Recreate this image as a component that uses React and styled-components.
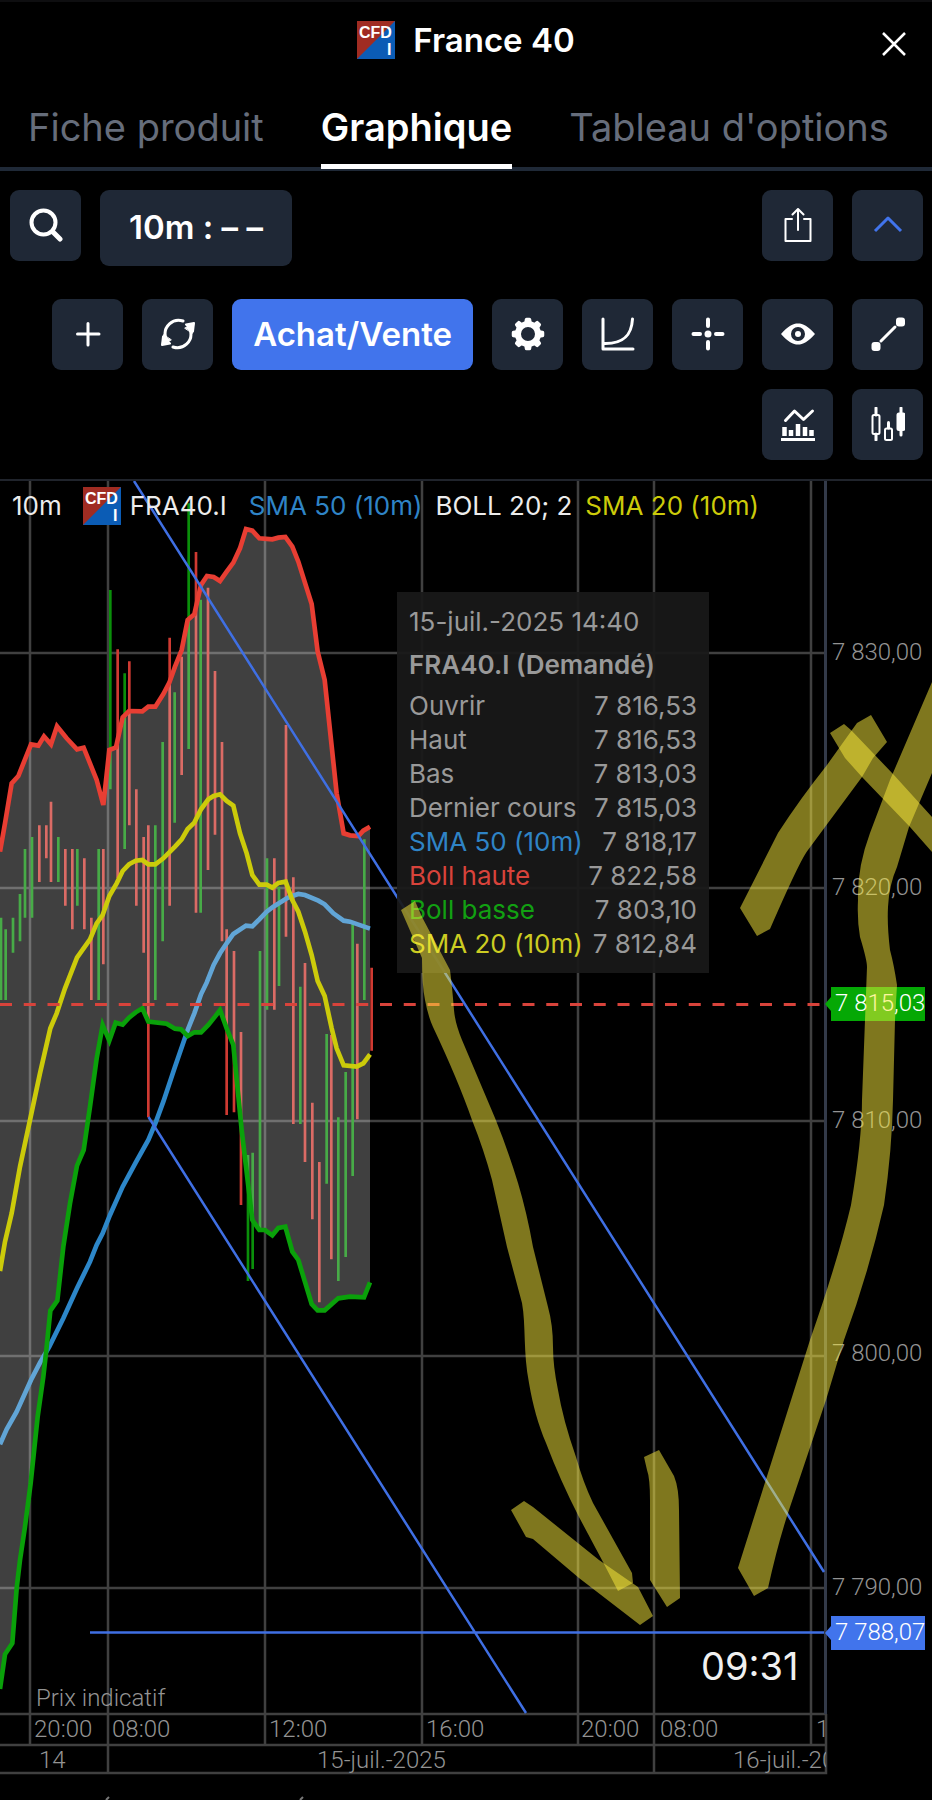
import React from 'react';
import styled, { createGlobalStyle } from 'styled-components';

const GlobalStyle = createGlobalStyle`
  body {
    margin: 0;
    background: #000;
    color: #fff;
    font-family: Inter, 'Liberation Sans', sans-serif;
  }
`;

const Page = styled.div`
  overflow: hidden;
`;

const Header = styled.header`
  display: grid;
  grid-template-columns: 1fr auto 1fr;
  align-items: center;
  height: 76px;
  padding: 0 20px;
  border-top: 2px solid #0e0e10;
`;

const Title = styled.h1`
  display: flex;
  grid-column: 2;
  align-items: center;
  gap: 18px;
  margin: 0;
  font-size: 33px;
  font-weight: 600;
  line-height: 40px;
`;

const CloseButton = styled.button`
  display: flex;
  justify-self: end;
  padding: 4px;
  margin-top: 8px;
  border: 0;
  background: none;
  color: #fff;
`;

const Tabs = styled.nav`
  display: flex;
  gap: 57px;
  padding: 0 28px;
  border-bottom: 4px solid #1f2937;
`;

const Tab = styled.a`
  padding: 26px 0 14px;
  margin-bottom: -2px;
  border-bottom: 5px solid ${props => (props.$active ? '#fff' : 'transparent')};
  color: ${props => (props.$active ? '#fff' : '#666d7b')};
  font-size: 38px;
  font-weight: ${props => (props.$active ? 600 : 400)};
  line-height: 46px;
  text-decoration: none;
  white-space: nowrap;
`;

const Toolbar = styled.div`
  display: flex;
  align-items: flex-start;
  gap: 19px;
  padding: 19px 9px 33px 10px;
`;

const Tools = styled.div`
  display: flex;
  flex-wrap: wrap;
  justify-content: flex-end;
  gap: 19px;
  padding: 0 9px 19px;
`;

const Button = styled.button`
  display: flex;
  align-items: center;
  justify-content: center;
  box-sizing: border-box;
  min-width: 71px;
  height: ${props => (props.$tall ? 76 : 71)}px;
  padding: 0 ${props => props.$pad || 0}px 2px;
  border: 0;
  border-radius: 9px;
  background: ${props => (props.$primary ? '#4174ec' : '#1f2836')};
  color: ${props => (props.$accent ? '#4174ec' : '#fff')};
  font: 600 33px Inter, 'Liberation Sans', sans-serif;
  white-space: pre;
`;

const Spacer = styled.div`
  flex: 1;
`;

const Chart = styled.main`
  position: relative;
  border-top: 2px solid #20242c;
`;

const Plot = styled.svg`
  display: block;
  width: 100%;
  height: auto;
`;

const Overlay = styled(Plot)`
  position: absolute;
  top: 0;
  left: 0;
  pointer-events: none;
`;

const Legend = styled.div`
  position: absolute;
  top: 6px;
  left: 12px;
  display: flex;
  align-items: center;
  gap: 13px;
  font-size: 26px;
  line-height: 38px;
  white-space: nowrap;
`;

const Symbol = styled.span`
  display: flex;
  align-items: center;
  gap: 9px;
  padding: 0 9px 0 8px;
`;

const Label = styled.span`
  color: ${props => props.$color || '#ececec'};
`;

const Tooltip = styled.section`
  position: absolute;
  top: 111px;
  left: 397px;
  box-sizing: border-box;
  width: 312px;
  padding: 12px;
  background: rgba(25, 25, 25, 0.93);
  color: #999;
  font-size: 26px;
`;

const TooltipDate = styled.div`
  line-height: 36px;
`;

const TooltipTitle = styled.h2`
  margin: 7px 0 6px;
  font-size: 26px;
  font-weight: 600;
  line-height: 36px;
`;

const Quotes = styled.table`
  width: 100%;
  border-collapse: collapse;
  line-height: 34px;
  white-space: nowrap;

  td {
    padding: 0;
    text-align: right;
  }
`;

const QuoteName = styled.th`
  padding: 0;
  color: ${props => props.$color || '#999'};
  font-weight: 400;
  text-align: left;
`;

const AxisText = styled.text`
  fill: ${props => props.$color || '#939393'};
  font-family: Roboto, 'Liberation Sans', sans-serif;
  font-size: 24px;
  font-weight: 300;
`;

const Countdown = styled.text`
  fill: #f0f0f0;
  font-family: Inter, 'Liberation Sans', sans-serif;
  font-size: 38px;
`;

const LogoText = styled.text`
  fill: #fff;
  font-family: 'Liberation Sans', sans-serif;
  font-size: 16px;
  font-weight: 700;
`;

const BLUE = '#3f6fe3';
const VIEW_BOX = '0 481 932 1319';

const quotes = [
  ['Ouvrir', '7 816,53'],
  ['Haut', '7 816,53'],
  ['Bas', '7 813,03'],
  ['Dernier cours', '7 815,03'],
  ['SMA 50 (10m)', '7 818,17', '#2f84c6'],
  ['Boll haute', '7 822,58', '#d8433b'],
  ['Boll basse', '7 803,10', '#12a012'],
  ['SMA 20 (10m)', '7 812,84', '#cccc22'],
];

const prices = [
  [653, 660, '7 830,00'],
  [888, 895, '7 820,00'],
  [1121, 1128, '7 810,00'],
  [1356, 1361, '7 800,00'],
  [1588, 1595, '7 790,00'],
];

const times = [
  [30, 34, '20:00'],
  [108, 112, '08:00', true],
  [265, 269, '12:00'],
  [422, 426, '16:00'],
  [578, 581, '20:00'],
  [654, 660, '08:00', true],
  [811, 816, '12:00'],
];

// Series are sampled on a grid three times finer than the plot.
const upper =
  '0,1145 15,1060 35,940 55,918 93,823 115,827 132,799 153,823 171,769 200,805 231,838 251,833 270,880 290,930 310,1005 328,840 348,832 368,742 387,723 427,724 445,710 466,710 490,672 508,638 525,590 545,540 563,450 583,433 603,345 621,318 641,321 660,333 680,305 700,278 720,235 738,177 757,182 778,205 817,208 835,203 856,201 877,230 895,275 935,402 953,545 974,630 1010,970 1031,1090 1050,1096 1075,1098 1090,1082 1110,1070';
const lower =
  '0,3657 15,3553 37,3520 50,3355 60,3270 75,3170 92,3040 113,2840 130,2720 140,2630 151,2522 172,2492 190,2330 210,2200 231,2087 251,2040 270,1910 290,1765 308,1665 328,1712 347,1658 368,1664 387,1643 407,1627 427,1615 445,1655 500,1661 525,1676 543,1678 563,1698 583,1687 603,1687 625,1665 645,1640 660,1620 680,1675 700,1725 725,1980 757,2250 778,2280 795,2280 817,2296 835,2274 856,2270 877,2345 895,2370 935,2502 953,2521 974,2521 1015,2485 1050,2480 1092,2482 1110,2437';
const sma20 =
  '0,2403 15,2315 35,2230 60,2090 90,1950 120,1810 151,1675 170,1630 195,1555 231,1463 270,1408 290,1360 308,1335 328,1278 350,1240 368,1203 387,1183 407,1172 427,1170 445,1183 466,1183 490,1165 525,1130 545,1108 563,1077 583,1058 603,1018 625,988 641,978 660,973 680,993 700,1007 720,1090 740,1150 757,1215 778,1244 800,1244 817,1253 835,1239 857,1235 877,1290 895,1325 915,1385 935,1455 953,1533 974,1578 995,1675 1010,1735 1031,1786 1070,1790 1090,1780 1110,1753';
const sma50 =
  '0,2923 20,2878 50,2825 93,2730 120,2678 148,2630 190,2545 231,2455 270,2375 290,2325 308,2290 330,2235 368,2150 407,2078 445,2010 466,1960 490,1895 525,1790 563,1680 583,1630 603,1573 620,1538 641,1485 660,1450 680,1420 700,1392 738,1367 757,1369 778,1348 800,1325 820,1310 857,1287 870,1280 895,1272 915,1275 955,1292 974,1303 1000,1330 1031,1352 1050,1355 1110,1376';

const rising = [
  [3, 1343, 1590], [17, 1378, 1590], [39, 1343, 1448], [60, 1272, 1414], [75, 1137, 1343], [96, 1101, 1343],
  [175, 1101, 1236], [232, 1137, 1307], [296, 1137, 1590], [331, 360, 958], [374, 610, 1137], [466, 1066, 1590],
  [488, 816, 1414], [524, 667, 1058], [566, 100, 837], [602, 389, 1328], [744, 2055, 2433], [758, 2048, 2397],
  [780, 1443, 2275], [801, 1165, 1619], [837, 1250, 1548], [901, 1550, 1962], [980, 1692, 2141], [1015, 1942, 2433],
  [1037, 1806, 2361], [1058, 1362, 2118], [1093, 1108, 1590],
];

const falling = [
  [118, 1066, 1236], [139, 1066, 1165], [153, 995, 1236], [196, 1137, 1307], [217, 1137, 1378], [253, 1165, 1378],
  [274, 1343, 1590], [310, 1137, 1483], [353, 538, 1225], [388, 574, 1066], [409, 958, 1307], [431, 1101, 1448],
  [445, 1066, 1942], [509, 503, 1307], [545, 560, 915], [588, 246, 1328], [624, 353, 1200], [645, 603, 1094],
  [666, 816, 1414], [680, 1378, 1935], [702, 1443, 1927], [723, 1686, 2205], [823, 1165, 1619], [858, 765, 1400],
  [880, 1222, 1962], [915, 1479, 2076], [937, 1898, 2248], [958, 2076, 2497], [994, 1695, 2368], [1072, 1421, 1948],
  [1115, 1493, 1742],
];

const markers = [
  'M401 910 L422 958 Q422 985 425 1000 Q428 1016 433 1027 Q458 1080 472 1120 Q484 1150 492 1180 L507 1247 L522 1303 C526 1325 523 1353 529 1383 C533 1406 538 1424 546 1443 Q560 1480 579 1517 L603 1562 L618 1591 L633 1583 L632 1573 L593 1503 Q583 1482 576 1457 Q563 1420 558 1390 Q553 1366 553 1347 Q553 1325 548 1307 L533 1247 Q527 1213 518 1183 Q508 1150 495 1118 L462 1040 Q455 1023 454 1010 Q452 985 450 970 L422 917 L415 901 Z',
  'M511 1510 L524 1501 L533 1507 L599 1560 L638 1587 L653 1616 L640 1625 L579 1578 L533 1539 L526 1537 Z',
  'M644 1457 L659 1450 L674 1476 Q679 1488 679 1510 L680 1598 L667 1607 L650 1580 L650 1500 Q650 1478 647 1470 Z',
  'M738 1568 L754 1596 L768 1588 Q778 1543 789 1510 L826 1400 L844 1340 Q868 1275 884 1205 Q892 1150 893 1100 L895 1020 L897 985 Q894 965 890 950 Q887 925 888 907 Q889 885 897 867 L909 827 L932 773 V682 L890 780 L870 833 Q857 868 858 900 Q857 920 860 937 Q867 960 867 967 L865 1020 L862 1100 Q862 1140 851 1205 Q838 1260 810 1340 Z',
  'M740 908 L778 833 Q800 799 827 765 L857 723 L871 715 L887 742 L873 758 L862 777 L808 850 Q800 860 770 929 L757 936 Z',
  'M830 733 L844 724 L851 730 L893 774 L932 817 V852 L910 827 L862 777 L845 758 Z',
];

function Logo() {
  return (
    <svg width="38" height="38" viewBox="0 0 38 38">
      <rect width="38" height="38" fill="#0b5cb5" />
      <path d="M0 0H38L0 38Z" fill="#a02c22" />
      <LogoText x="2" y="17">
        CFD
      </LogoText>
      <LogoText x="30" y="34">
        I
      </LogoText>
    </svg>
  );
}

function Icon({ children, width = 3 }) {
  return (
    <svg
      width="34"
      height="34"
      viewBox="0 0 34 34"
      fill="none"
      stroke="currentColor"
      strokeWidth={width}
      strokeLinecap="round"
      strokeLinejoin="round"
    >
      {children}
    </svg>
  );
}

function RefreshIcon() {
  return (
    <Icon>
      <path d="M22 4A13.5 13.5 0 0 0 4.5 20" />
      <path d="M12 30A13.5 13.5 0 0 0 29.5 14" />
      <path d="M25 7.5 33 6 32 14.5Z" fill="currentColor" strokeWidth="2" />
      <path d="M24 11 33 6 31.5 16Z" fill="currentColor" strokeWidth="1" />
      <path d="M9 26.5 1 28 2 19.5Z" fill="currentColor" strokeWidth="2" />
      <path d="M10 23 1 28 2.5 18Z" fill="currentColor" strokeWidth="1" />
    </Icon>
  );
}

function GearIcon() {
  return (
    <Icon>
      <circle cx="17" cy="17" r="10" strokeWidth="6" />
      {[0, 45, 90, 135, 180, 225, 270, 315].map(angle => (
        <path
          key={angle}
          d="M15.5 2.5H18.5L19 6H15Z"
          strokeWidth="3.5"
          fill="currentColor"
          transform={`rotate(${angle} 17 17)`}
        />
      ))}
    </Icon>
  );
}

function IndicatorIcon() {
  return (
    <Icon>
      <path d="M4.5 13.5 13.5 4 22.5 12.5 31.5 4" />
      <path d="M0 32.5H34" strokeLinecap="butt" />
      <path d="M3.5 20V29M10 23V29M17 17V29M24 20V29M30.5 23V29" strokeWidth="4.5" strokeLinecap="butt" />
    </Icon>
  );
}

function CandleIcon() {
  return (
    <Icon width={2}>
      <rect x="1.5" y="8" width="7" height="19" rx="1.5" />
      <path d="M5 1V8M5 27V33" strokeWidth="3" />
      <rect x="14" y="21.5" width="7" height="11.5" rx="1.5" />
      <path d="M17.5 15.5V21" strokeWidth="3" />
      <rect x="26.5" y="6.5" width="7" height="16.5" rx="1.5" fill="currentColor" />
      <path d="M30 1V7M30 23V28" strokeWidth="3" />
    </Icon>
  );
}

function Bars({ data, color }) {
  return <path d={data.map(([x, from, to]) => `M${x} ${from}V${to}`).join('')} stroke={color} strokeWidth="8" fill="none" />;
}

function PriceTag({ y, color, children }) {
  return (
    <g>
      <path d={`M825 ${y}L831 ${y - 7}V${y - 17}H925V${y + 17}H831V${y + 7}Z`} fill={color} />
      <AxisText x="835" y={y + 7} $color="#fff">
        {children}
      </AxisText>
    </g>
  );
}

function PricePlot() {
  const lowerReversed = lower.split(' ').reverse().join(' ');

  return (
    <Plot viewBox={VIEW_BOX}>
      <defs>
        <clipPath id="time-axis">
          <rect x="0" y="1714" width="826" height="60" />
        </clipPath>
      </defs>

      <g stroke="#404040" strokeWidth="2.5">
        {prices.map(([y]) => (
          <path key={y} d={`M0 ${y}H825`} />
        ))}
        {times.map(([x, , , dayStart]) => (
          <path key={x} d={`M${x} 481V${dayStart ? 1773 : 1745}`} />
        ))}
        <path d="M0 1714H825M0 1745H825M0 1773H826V1714" fill="none" />
      </g>
      <path d="M825.5 481V1714" stroke="#333a49" strokeWidth="3" />

      <g transform="translate(0 470) scale(0.33333)" fill="none">
        <Bars data={rising} color="#0a8f0a" />
        <Bars data={falling} color="#cf3a32" />
        <polyline points={sma50} stroke="#2d87c9" strokeWidth="14" />
        <polygon points={`${upper} ${lowerReversed}`} fill="rgba(255, 255, 255, 0.25)" />
        <polyline points={upper} stroke="#e83e33" strokeWidth="14" />
        <polyline points={lower} stroke="#0aa10a" strokeWidth="14" />
        <polyline points={sma20} stroke="#cccb0a" strokeWidth="14" />
      </g>

      <path d="M0 1004.5H822" stroke="#d8433b" strokeWidth="3" strokeDasharray="12 11.75" />
      <path d="M134 481L824 1572M148.5 1117L526 1713M90 1632.5H824" stroke={BLUE} strokeWidth="2.5" />

      {prices.map(([, y, label]) => (
        <AxisText key={label} x="832" y={y}>
          {label}
        </AxisText>
      ))}
      <PriceTag y={1004} color="#05a805">
        7 815,03
      </PriceTag>
      <PriceTag y={1633} color="#4174ec">
        7 788,07
      </PriceTag>

      <AxisText x="36" y="1706">
        Prix indicatif
      </AxisText>
      <Countdown x="701" y="1680">
        09:31
      </Countdown>

      <g clipPath="url(#time-axis)">
        {times.map(([, x, label]) => (
          <AxisText key={x} x={x} y="1737">
            {label}
          </AxisText>
        ))}
        <AxisText x="39" y="1768">
          14
        </AxisText>
        <AxisText x="317" y="1768">
          15-juil.-2025
        </AxisText>
        <AxisText x="733" y="1768">
          16-juil.-2025
        </AxisText>
      </g>
      <path d="M109 1797L106 1800M303 1797L300 1800" stroke="#777" strokeWidth="2" />
    </Plot>
  );
}

export default function App() {
  return (
    <Page>
      <GlobalStyle />
      <Header>
        <Title>
          <Logo />
          France 40
        </Title>
        <CloseButton aria-label="Fermer">
          <svg width="28" height="28" viewBox="0 0 28 28" stroke="currentColor" strokeWidth="2.5">
            <path d="M3 3L25 25M25 3L3 25" />
          </svg>
        </CloseButton>
      </Header>

      <Tabs>
        <Tab href="#fiche">Fiche produit</Tab>
        <Tab href="#graphique" $active>
          Graphique
        </Tab>
        <Tab href="#options">Tableau d'options</Tab>
      </Tabs>

      <Toolbar>
        <Button aria-label="Rechercher">
          <Icon width={4}>
            <circle cx="14.5" cy="14.5" r="12" />
            <path d="M24 24L31 31" strokeWidth="5" />
          </Icon>
        </Button>
        <Button $tall $pad={29}>
          10m : – –
        </Button>
        <Spacer />
        <Button aria-label="Partager">
          <Icon width={2}>
            <path d="M11 11H4.5V33H29.5V11H23" />
            <path d="M17 22V1M11.5 6.5L17 1L22.5 6.5" />
          </Icon>
        </Button>
        <Button $accent aria-label="Replier">
          <Icon>
            <path d="M4 23L17 10L30 23" strokeLinecap="butt" />
          </Icon>
        </Button>
      </Toolbar>

      <Tools>
        <Button aria-label="Ajouter">
          <Icon>
            <path d="M17 6.5V28M6.5 17H28" />
          </Icon>
        </Button>
        <Button aria-label="Actualiser">
          <RefreshIcon />
        </Button>
        <Button $primary $pad={21}>
          Achat/Vente
        </Button>
        <Button aria-label="Réglages">
          <GearIcon />
        </Button>
        <Button aria-label="Échelle">
          <Icon>
            <path d="M2 2V32H32" />
            <path d="M31.5 2C30.5 20 21 27 3 26.5" />
          </Icon>
        </Button>
        <Button aria-label="Réticule">
          <Icon width={4}>
            <path d="M17 2.5V9M17 25V31.5M2.5 17H9M25 17H31.5" />
            <circle cx="17" cy="17" r="3.5" fill="currentColor" stroke="none" />
          </Icon>
        </Button>
        <Button aria-label="Affichage">
          <Icon>
            <path
              d="M0 17C7 9 12 6.5 17 6.5S27 9 34 17C27 25 22 27.5 17 27.5S7 25 0 17ZM17 10a7 7 0 1 0 0 14a7 7 0 1 0 0-14Z"
              fill="currentColor"
              fillRule="evenodd"
              stroke="none"
            />
            <circle cx="17" cy="17" r="3" fill="currentColor" stroke="none" />
          </Icon>
        </Button>
        <Button aria-label="Dessiner une ligne">
          <Icon>
            <path d="M10 24L24 10" />
            <rect x="0.5" y="25" width="9" height="9" rx="3" fill="currentColor" stroke="none" />
            <rect x="25" y="0.5" width="9" height="9" rx="3" fill="currentColor" stroke="none" />
          </Icon>
        </Button>
        <Button aria-label="Indicateurs">
          <IndicatorIcon />
        </Button>
        <Button aria-label="Chandeliers">
          <CandleIcon />
        </Button>
      </Tools>

      <Chart>
        <PricePlot />
        <Legend>
          <Label>10m</Label>
          <Symbol>
            <Logo />
            <Label>FRA40.I</Label>
          </Symbol>
          <Label $color="#2f84c6">SMA 50 (10m)</Label>
          <Label>BOLL 20; 2</Label>
          <Label $color="#cccb0a">SMA 20 (10m)</Label>
        </Legend>
        <Tooltip>
          <TooltipDate>15-juil.-2025 14:40</TooltipDate>
          <TooltipTitle>FRA40.I (Demandé)</TooltipTitle>
          <Quotes>
            <tbody>
              {quotes.map(([name, value, color]) => (
                <tr key={name}>
                  <QuoteName scope="row" $color={color}>
                    {name}
                  </QuoteName>
                  <td>{value}</td>
                </tr>
              ))}
            </tbody>
          </Quotes>
        </Tooltip>
        <Overlay viewBox={VIEW_BOX} fill="rgba(254, 238, 60, 0.5)">
          {markers.map(d => (
            <path key={d} d={d} />
          ))}
        </Overlay>
      </Chart>
    </Page>
  );
}
